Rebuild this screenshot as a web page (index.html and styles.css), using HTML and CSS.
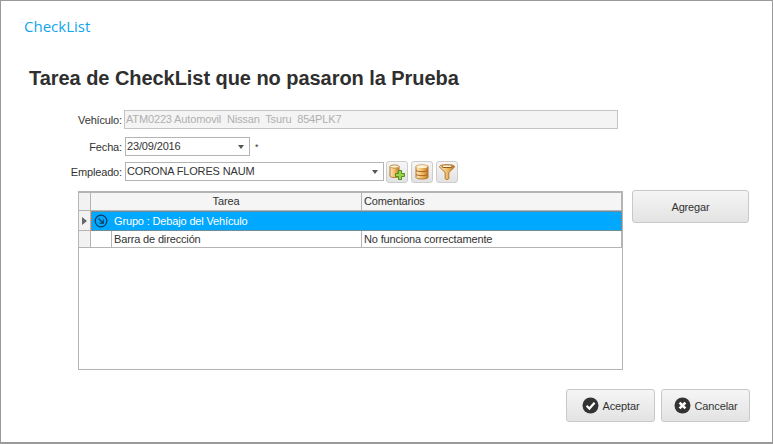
FILE: index.html
```html
<!DOCTYPE html>
<html lang="es">
<head>
  <meta charset="UTF-8" />
  <title>CheckList</title>
  <link rel="stylesheet" href="styles.css">
</head>
<body>
  <div class="ventana">
    <div class="app-titulo">CheckList</div>
    <h1>Tarea de CheckList que no pasaron la Prueba</h1>

    <div class="fila fila-vehiculo">
      <label>Vehículo:</label>
      <div class="campo campo-vehiculo">ATM0223 Automovil  Nissan  Tsuru  854PLK7</div>
    </div>
    <div class="fila fila-fecha">
      <label>Fecha:</label>
      <div class="campo campo-fecha">23/09/2016<span class="flecha"></span></div>
      <span class="requerido">*</span>
    </div>
    <div class="fila fila-empleado">
      <label>Empleado:</label>
      <div class="campo campo-empleado">CORONA FLORES NAUM<span class="flecha"></span></div>
      <div class="iconos">
        <button class="btn-icono">
          <svg width="18" height="18" viewBox="0 0 18 18">
            <defs>
              <linearGradient id="oro" x1="0" x2="1" y1="0" y2="0">
                <stop offset="0" stop-color="#fbe7bf"/>
                <stop offset="0.5" stop-color="#f0bd6c"/>
                <stop offset="1" stop-color="#c47a22"/>
              </linearGradient>
            </defs>
            <path d="M2 3.5C2 2 11 2 11 3.5V13C11 15 2 15 2 13Z" fill="url(#oro)" stroke="#b5772a"/>
            <ellipse cx="6.5" cy="3.5" rx="4.5" ry="1.6" fill="#fdf1d6" stroke="#b5772a" stroke-width="0.7"/>
            <path d="M10.5 7.5h3v3h3v3h-3v3h-3v-3h-3v-3h3z" fill="#9bd24a" stroke="#4f8f1c"/>
          </svg>
        </button>
        <button class="btn-icono">
          <svg width="18" height="18" viewBox="0 0 18 18">
            <path d="M3 3.5C3 1.5 15 1.5 15 3.5V14.5C15 16.5 3 16.5 3 14.5Z" fill="url(#oro)" stroke="#b5772a"/>
            <path d="M3 7.5C5 9 13 9 15 7.5M3 11.5C5 13 13 13 15 11.5" fill="none" stroke="#a9651c"/>
            <ellipse cx="9" cy="3.5" rx="5.5" ry="1.5" fill="#fdf1d6"/>
          </svg>
        </button>
        <button class="btn-icono">
          <svg width="18" height="18" viewBox="0 0 18 18">
            <path d="M1.5 3.5C1.5 1 16.5 1 16.5 3.5C16.5 5.5 11 8 10.8 10V15.5C10.8 16.8 7.2 16.8 7.2 15.5V10C7 8 1.5 5.5 1.5 3.5Z" fill="url(#oro)" stroke="#b5772a"/>
            <ellipse cx="9" cy="3.6" rx="5.6" ry="1.5" fill="#8f5a1c"/>
            <ellipse cx="9" cy="3.2" rx="4.6" ry="0.9" fill="#fdf1d6"/>
          </svg>
        </button>
      </div>
    </div>

    <div class="zona-tabla">
      <div class="tabla">
        <div class="tabla-fila cabecera">
          <div class="indicador"></div>
          <div class="col-tarea">Tarea</div>
          <div class="col-comentarios">Comentarios</div>
        </div>
        <div class="tabla-fila grupo">
          <div class="indicador"><span class="puntero"></span></div>
          <div class="grupo-texto">
            <svg class="grupo-icono" width="14" height="14" viewBox="0 0 14 14">
              <circle cx="7" cy="7" r="5.8" fill="none" stroke="#12395c" stroke-width="1.2"/>
              <path d="M4.5 4.5L9 9M9.3 5.5V9.3H5.5" fill="none" stroke="#12395c" stroke-width="1.1"/>
            </svg>
            Grupo : Debajo del Vehículo
          </div>
        </div>
        <div class="tabla-fila dato">
          <div class="indicador"></div>
          <div class="sangria"></div>
          <div class="dato-tarea">Barra de dirección</div>
          <div class="col-comentarios">No funciona correctamente</div>
        </div>
      </div>
      <button class="btn btn-agregar">Agregar</button>
    </div>

    <div class="acciones">
      <button class="btn btn-accion">
        <svg width="17" height="17" viewBox="0 0 17 17">
          <circle cx="8.5" cy="8.5" r="8" fill="#333"/>
          <path d="M4.6 8.8L7.4 11.6L12.6 5.8" fill="none" stroke="#fff" stroke-width="2.2"/>
        </svg>
        Aceptar
      </button>
      <button class="btn btn-accion">
        <svg width="17" height="17" viewBox="0 0 17 17">
          <circle cx="8.5" cy="8.5" r="8" fill="#333"/>
          <path d="M5.6 5.6L11.4 11.4M11.4 5.6L5.6 11.4" fill="none" stroke="#fff" stroke-width="2.6"/>
        </svg>
        Cancelar
      </button>
    </div>
  </div>
</body>
</html>
```

FILE: styles.css
```css
html, body { margin: 0; padding: 0; background: #fff; }
body { font-family: "Liberation Sans", Arial, sans-serif; font-size: 11px; letter-spacing: -0.15px; color: #333; }
.ventana { box-sizing: border-box; width: 773px; height: 444px; border: 1px solid #999; border-bottom-width: 2px; padding-top: 16px; overflow: hidden; }
.app-titulo { font-family: "Open Sans", sans-serif; font-size: 15px; line-height: 18px; letter-spacing: 0; color: #12a5ec; margin-left: 23px; }
h1 { font-size: 20px; line-height: 24px; letter-spacing: -0.05px; margin: 31px 0 0 28px; font-weight: bold; color: #2f2f2f; }

.fila { display: flex; align-items: center; }
.fila label { width: 123px; padding-right: 2px; box-sizing: border-box; text-align: right; }
.fila-vehiculo { margin-top: 20px; height: 19px; }
.fila-fecha { margin-top: 8px; height: 19px; }
.fila-empleado { margin-top: 5px; height: 22px; }
.campo { box-sizing: border-box; border: 1px solid #b4b4b4; padding-left: 1px; line-height: 17px; position: relative; white-space: pre; background: #fff; }
.campo-vehiculo { width: 494px; height: 19px; background: #f4f4f4; border: 1px solid #c4c4c4; color: #b0b0b0; }
.campo-fecha { width: 125px; height: 19px; margin-left: 1px; }
.campo-empleado { width: 259px; height: 19px; margin: 0 0 1px 1px; }
.flecha { position: absolute; right: 5px; top: 7px; border: 3.5px solid transparent; border-top: 4px solid #555; border-bottom: 0; }
.requerido { margin-left: 5px; font-size: 9px; }

.iconos { display: flex; gap: 3px; margin-left: 2px; }
.btn-icono { box-sizing: border-box; width: 22px; height: 22px; padding: 0; border: 1px solid #ccc; border-radius: 3px; background: linear-gradient(#f6f6f6, #e2e2e2); display: flex; align-items: center; justify-content: center; }

.zona-tabla { display: flex; align-items: flex-start; margin: 8px 0 0 77px; }
.tabla { box-sizing: border-box; width: 545px; height: 179px; border: 1px solid #b4b4b4; border-top-width: 2px; }
.tabla-fila { display: flex; box-sizing: border-box; }
.indicador { box-sizing: border-box; width: 12px; background: #f2f2f2; border-right: 1px solid #b4b4b4; border-bottom: 1px solid #b4b4b4; display: flex; align-items: center; justify-content: center; flex: none; }
.cabecera { height: 18px; line-height: 17px; }
.col-tarea { box-sizing: border-box; width: 271px; text-align: center; background: #f5f5f5; border-right: 1px solid #b4b4b4; border-bottom: 1px solid #b4b4b4; }
.cabecera .col-comentarios { background: #f5f5f5; }
.col-comentarios { box-sizing: border-box; flex: 1; padding-left: 2px; border-bottom: 1px solid #b4b4b4; border-right: 1px solid #b4b4b4; }
.grupo { height: 20px; }
.puntero { border: 4px solid transparent; border-left: 5px solid #666; border-right: 0; }
.grupo-texto { flex: 1; display: flex; align-items: center; gap: 6px; padding-left: 3px; background: #00a8ff; color: #fff; outline: 1px dotted #d9743a; outline-offset: -1px; }
.dato { height: 17px; line-height: 17px; }
.sangria { box-sizing: border-box; width: 21px; border-right: 1px solid #b4b4b4; border-bottom: 1px solid #b4b4b4; }
.dato-tarea { box-sizing: border-box; width: 250px; padding-left: 2px; border-right: 1px solid #b4b4b4; border-bottom: 1px solid #b4b4b4; }

.btn { box-sizing: border-box; border: 1px solid #c8c8c8; border-radius: 3px; background: linear-gradient(#f5f5f5, #e3e3e3); font: inherit; letter-spacing: inherit; color: #333; padding: 0; }
.btn-agregar { width: 117px; height: 33px; margin: -1px 0 0 9px; }
.acciones { display: flex; justify-content: flex-end; gap: 6px; margin: 19px 22px 0 0; }
.btn-accion { width: 89px; height: 33px; display: flex; align-items: center; justify-content: center; gap: 4px; }
```
